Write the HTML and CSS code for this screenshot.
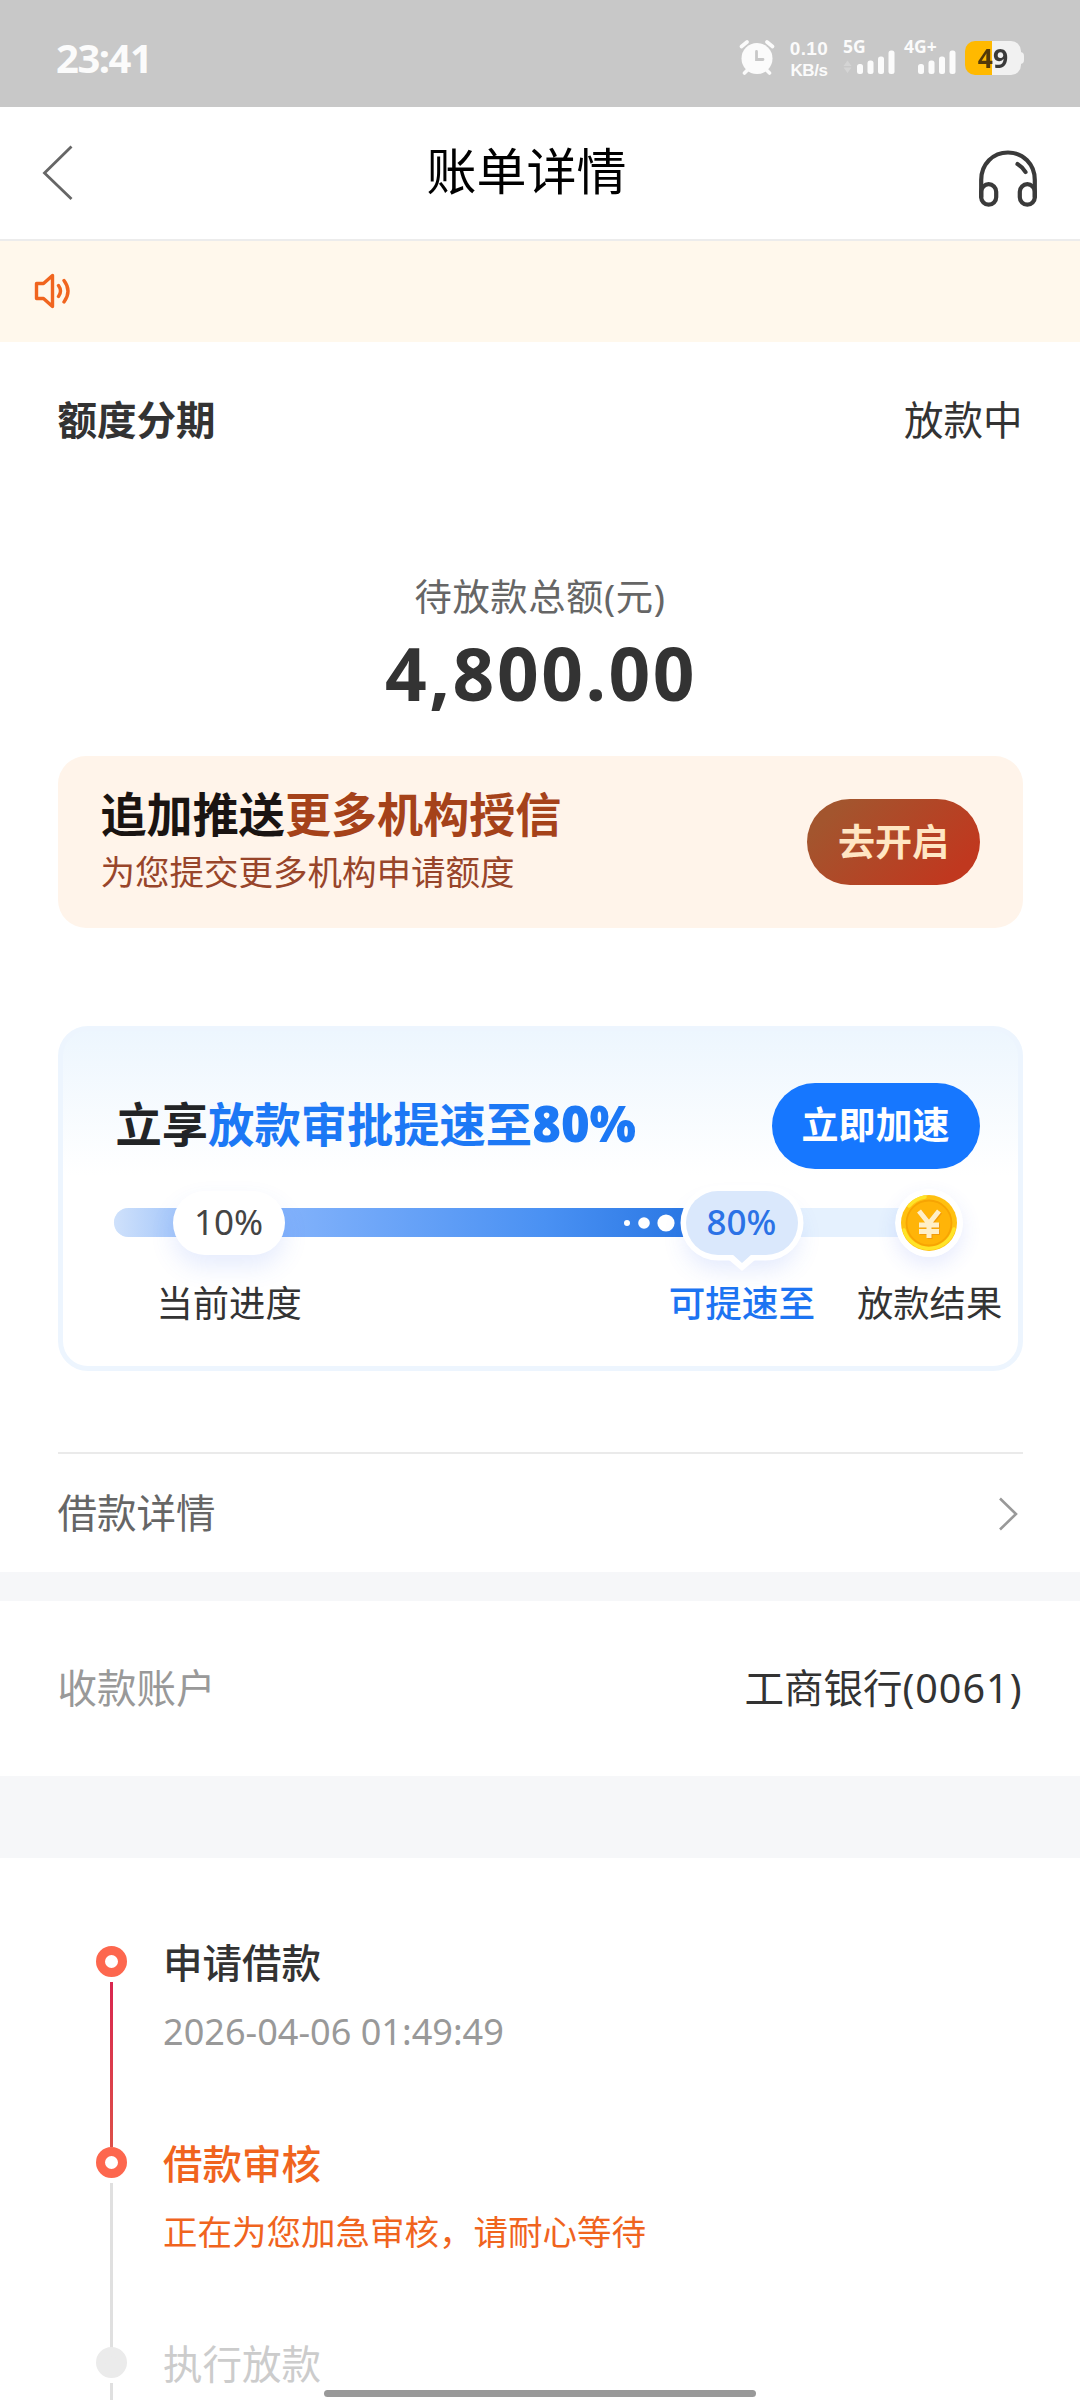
FILE: index.html
```html
<!DOCTYPE html>
<html lang="zh-CN">
<head>
<meta charset="utf-8">
<title>账单详情</title>
<link rel="stylesheet" href="styles.css">
</head>
<body>
<div class="status-bar">
  <span class="clock">23:41</span>
  <div class="status-icons">
    <svg class="alarm" width="36" height="36" viewBox="0 0 36 36" fill="none" stroke="#fbfbfb" stroke-linecap="round">
      <circle cx="18" cy="18.5" r="15.5" fill="#fbfbfb" stroke="none"/>
      <path d="M2.500 6.500L8 2M33.500 6.500L28 2" stroke-width="3.600"/>
      <path d="M5.500 33L9 29.500M30.500 33L27 29.500" stroke-width="3.600"/>
      <path d="M17.500 11.500V19.500H24" stroke="#c8c8c8" stroke-width="2.800"/>
    </svg>
    <div class="net-speed"><span>0.10</span><span>KB/s</span></div>
    <svg class="signal" width="54" height="36" viewBox="0 0 54 36" fill="#fbfbfb">
      <path d="M4.500 20.500l4 5.500h-8zM4.500 33l4-5.500h-8z" fill="#d4d4d4"/>
      <rect x="14" y="24" width="6" height="10" rx="2.500"/>
      <rect x="24.500" y="20.500" width="6" height="13.500" rx="2.500"/>
      <rect x="35" y="16.500" width="6" height="17.500" rx="2.500"/>
      <rect x="45.500" y="10.500" width="6" height="23.500" rx="2.500"/>
      <text x="0" y="13">5G</text>
    </svg>
    <svg class="signal" width="54" height="36" viewBox="0 0 54 36" fill="#fbfbfb">
      <rect x="14" y="24" width="6" height="10" rx="2.500"/>
      <rect x="24.500" y="20.500" width="6" height="13.500" rx="2.500"/>
      <rect x="35" y="16.500" width="6" height="17.500" rx="2.500"/>
      <rect x="45.500" y="10.500" width="6" height="23.500" rx="2.500"/>
      <text x="0" y="13">4G+</text>
    </svg>
    <div class="battery"><span class="battery-level">49</span></div>
  </div>
</div>

<header class="nav">
  <svg class="back" width="32" height="56" viewBox="0 0 32 56" fill="none" stroke="#666" stroke-width="2.800"><path d="M29.500 1.500L2.500 28L29.500 54"/></svg>
  <h1>账单详情</h1>
  <svg class="service" width="58" height="58" viewBox="0 0 58 58" fill="none" stroke="#3a3a3a" stroke-width="4.200" stroke-linecap="round">
    <path d="M2.200 47V30C2.200 14 14 2.500 29 2.500S55.800 14 55.800 30V47"/>
    <rect x="2.200" y="34.200" width="15" height="20.500" rx="7.500"/>
    <rect x="40.800" y="34.200" width="15" height="20.500" rx="7.500"/>
    <path d="M38.500 14Q43.500 17 46.500 22"/>
  </svg>
</header>

<div class="notice">
  <svg width="37" height="36" viewBox="0 0 37 36" fill="none" stroke="#f0651f" stroke-width="3.400" stroke-linejoin="round" stroke-linecap="round">
    <path d="M2.500 10.500H9.500L18.500 2.500V33.500L9.500 25.500H2.500Z"/>
    <path d="M24.500 12.500Q28.500 18 24.500 23.500M30 7.500Q38 18 30 29"/>
  </svg>
</div>

<main>
  <section class="bill">
    <div class="row bill-head"><strong>额度分期</strong><span>放款中</span></div>
    <p class="amount-label">待放款总额(元)</p>
    <p class="amount">4,800.00</p>

    <div class="promo">
      <div class="promo-text">
        <h2>追加推送<em>更多机构授信</em></h2>
        <p>为您提交更多机构申请额度</p>
      </div>
      <button class="pill promo-btn">去开启</button>
    </div>

    <div class="speed-card">
      <div class="speed-head">
        <h2>立享<em>放款审批提速至<b>80%</b></em></h2>
        <button class="pill speed-btn">立即加速</button>
      </div>
      <div class="track">
        <div class="track-fill"></div>
        <span class="mark now">10%</span>
        <svg class="dots" width="52" height="20" viewBox="0 0 52 20" fill="#fff">
          <circle cx="4" cy="10" r="3"/><circle cx="21" cy="10" r="5.800"/><circle cx="43" cy="10" r="8.600"/>
        </svg>
        <span class="mark target">80%</span>
        <svg class="coin" width="68" height="68" viewBox="0 0 68 68">
          <circle cx="34" cy="34" r="34" fill="#fff"/>
          <circle cx="34" cy="34" r="28" fill="#ffc010"/>
          <path d="M9 41A26 26 0 0 0 59 40M14 17A26 26 0 0 1 30 8" fill="none" stroke="#ffe428" stroke-width="3.500" stroke-linecap="round"/>
          <circle cx="34" cy="34" r="22.500" fill="#ffb408" stroke="#f7a403" stroke-width="1.800"/>
          <path d="M24 22L34 34.500L44 22M34 34.500V49M24 36H44M24 42.500H44" fill="none" stroke="#f39a0a" stroke-width="5" transform="translate(1 1)"/>
          <path d="M24 22L34 34.500L44 22M34 34.500V49M24 36H44M24 42.500H44" fill="none" stroke="#ffefc8" stroke-width="5"/>
        </svg>
      </div>
      <div class="track-labels"><span>当前进度</span><span class="active">可提速至</span><span>放款结果</span></div>
    </div>

    <div class="row detail">
      <span>借款详情</span>
      <svg width="22" height="36" viewBox="0 0 22 36" fill="none" stroke="#999" stroke-width="2.600"><path d="M2 2.500L18 18L2 33.500"/></svg>
    </div>
  </section>

  <section class="row account"><span>收款账户</span><span class="bank">工商银行<span class="tail">(0061)</span></span></section>

  <section class="timeline">
    <div class="step done">
      <div class="rail"><i class="dot"></i><i class="line"></i></div>
      <div class="step-body"><h3>申请借款</h3><p>2026-04-06 01:49:49</p></div>
    </div>
    <div class="step current">
      <div class="rail"><i class="dot"></i><i class="line"></i></div>
      <div class="step-body"><h3>借款审核</h3><p>正在为您加急审核，请耐心等待</p></div>
    </div>
    <div class="step pending">
      <div class="rail"><i class="dot"></i><i class="line"></i></div>
      <div class="step-body"><h3>执行放款</h3></div>
    </div>
  </section>
</main>
<div class="home-indicator"></div>
</body>
</html>
```
FILE: styles.css
```css
* { box-sizing: border-box; margin: 0; padding: 0; }

body {
  position: relative;
  width: 1080px;
  height: 2400px;
  overflow: hidden;
  background: #fff;
  color: #333;
  font-family: "Noto Sans", "Noto Sans CJK SC", sans-serif;
  font-size: 39.500px;
}

h1, h2, h3 { font-weight: 400; }
em, i { font-style: normal; }
svg { display: block; flex: none; }
button { border: 0; font: inherit; }

/* Status bar */
.status-bar {
  display: flex;
  justify-content: space-between;
  height: 107px;
  padding: 40px 55px 0 56px;
  background: #c8c8c8;
  color: #fbfbfb;
}
.clock { font-size: 40px; font-weight: 700; line-height: 36px; letter-spacing: -1.500px; }
.status-icons { display: flex; align-items: flex-start; }
.net-speed {
  display: flex;
  flex-direction: column;
  align-items: center;
  width: 42px;
  margin: -2px 13px 0 13px;
  font-family: "Liberation Sans", Arial, sans-serif;
  font-size: 19px;
  font-weight: 700;
  line-height: 22px;
  letter-spacing: .4px;
}
.net-speed span + span { font-size: 17px; letter-spacing: -0.400px; }
.signal { margin-right: 7px; overflow: visible; }
.signal text { font-size: 17.500px; font-weight: 700; }
.battery {
  position: relative;
  width: 56px;
  height: 34px;
  margin: 1px 4px 0 0;
  border-radius: 10px;
  background: linear-gradient(90deg, #ffb900 27px, #f1f1f1 27px);
}
.battery::after {
  content: "";
  position: absolute;
  right: -3px;
  top: 11px;
  width: 4px;
  height: 12px;
  border-radius: 0 4px 4px 0;
  background: #f1f1f1;
}
.battery-level {
  display: block;
  text-align: center;
  line-height: 35px;
  font-size: 26.500px;
  font-weight: 700;
  color: transparent;
  background: linear-gradient(90deg, #533909 27px, #3a3a3a 27px);
  background-clip: text;
  -webkit-background-clip: text;
}

/* Title bar */
.nav {
  display: flex;
  justify-content: space-between;
  height: 134px;
  padding: 0 43px 0 42px;
  border-bottom: 2px solid #ececec;
  color: #000;
}
.back { margin-top: 38px; }
.nav h1 { font-size: 50px; line-height: 128px; }
.service { margin-top: 43px; }

.notice { height: 101px; padding: 32px 0 0 34px; background: #fff8ec; }

/* Bill summary */
.row { display: flex; align-items: center; justify-content: space-between; }
.bill { padding: 0 57.500px; }
.bill-head { height: 156px; padding-bottom: 4px; }
.bill-head strong { font-weight: 700; }
.amount-label {
  margin-top: 70px;
  text-align: center;
  font-size: 37.300px;
  line-height: 58px;
  letter-spacing: .6px;
  color: #666;
}
.amount {
  margin-top: -1px;
  padding-left: 2px;
  text-align: center;
  font-size: 73px;
  line-height: 96px;
  font-weight: 700;
  letter-spacing: 2.500px;
}

.promo {
  display: flex;
  align-items: center;
  justify-content: space-between;
  height: 172px;
  margin-top: 35px;
  padding: 0 42.500px 0 43px;
  border-radius: 28px;
  background: #fff4ea;
}
.promo h2 { font-size: 46.100px; line-height: 60px; font-weight: 700; color: #1a1412; }
.promo em { color: #a5421a; }
.promo p { font-size: 34.500px; line-height: 54px; color: #98452a; }
.pill { height: 86px; padding-bottom: 5px; border-radius: 43px; font-size: 37px; font-weight: 700; text-align: center; }
.promo-btn { width: 173px; background: linear-gradient(135deg, #a3552e 15%, #c0381f 85%); color: #ffe6c3; }

/* Speed-up card */
.speed-card {
  height: 345px;
  margin-top: 98px;
  padding: 51.500px 0 0 53px;
  border: 5.500px solid #edf5fe;
  border-radius: 30px;
  background: linear-gradient(#edf6fe, #fff 145px);
}
.speed-head { display: flex; justify-content: space-between; height: 86px; padding-right: 38px; }
.speed-head h2 { line-height: 81px; font-size: 46.300px; font-weight: 700; color: #222426; white-space: nowrap; }
.speed-head em { color: #1c78f5; }
.speed-head b { font-size: 49px; }
.speed-btn { width: 208px; background: #1677ff; color: #fff; }

.track {
  position: relative;
  width: 816px;
  height: 29px;
  margin: 39px 0 0 -2px;
  border-radius: 15px;
  background: #e5f1fe;
}
.track-fill {
  width: 600px;
  height: 29px;
  border-radius: 15px 0 0 15px;
  background: linear-gradient(90deg, #cfe1fb 0, #a8c9fa 60px, #82b2fb 170px, #4a91f3 430px, #2b78e4 570px);
}
.mark {
  position: absolute;
  top: -17px;
  width: 112px;
  height: 64px;
  border-radius: 32px;
  background: #fff;
  box-shadow: 0 12px 24px rgba(60, 110, 240, .13);
  font-size: 35px;
  line-height: 62px;
  text-align: center;
  color: #444;
}
.mark.now { left: 59px; }
.mark.target {
  left: 572px;
  background: #dae8fc;
  color: #2b72e6;
  font-weight: 500;
  box-shadow: 0 0 0 5.500px #fff, 0 14px 24px rgba(60, 110, 240, .15);
}
.mark.target::before,
.mark.target::after {
  content: "";
  position: absolute;
  left: 50%;
  border-style: solid;
  border-color: transparent;
  transform: translateX(-50%);
}
.mark.target::before { top: 69px; border-width: 11px 13px 0; border-top-color: #fff; }
.mark.target::after { top: 63px; border-width: 9px 10px 0; border-top-color: #dae8fc; }
.dots { position: absolute; left: 509px; top: 5px; }
.coin {
  position: absolute;
  left: 781px;
  top: -19px;
  border-radius: 50%;
  box-shadow: 0 8px 20px rgba(60, 90, 240, .12);
}
.track-labels {
  display: flex;
  margin-top: 38px;
  padding-left: 41px;
  font-size: 36.300px;
  line-height: 56px;
  white-space: nowrap;
}
.track-labels .active { margin: 0 42px 0 367px; color: #1c74f2; font-weight: 500; font-size: 36.600px; }

.detail {
  height: 120px;
  margin-top: 81px;
  padding-right: 3px;
  border-top: 2px solid #eaeaea;
  color: #666;
}
.detail span { padding-bottom: 5px; }
.detail svg { margin-top: 2px; }

.account {
  height: 204px;
  padding: 0 57.500px 5px;
  border-top: 29px solid #f6f7f9;
  color: #999;
}
.account .bank { color: #333; }
.account .tail { letter-spacing: 1px; }

/* Progress timeline */
.timeline { height: 624px; padding: 83px 0 0 95px; border-top: 82px solid #f6f7f9; overflow: hidden; }
.step { display: flex; height: 200.700px; }
.rail { display: flex; flex-direction: column; align-items: center; width: 32px; margin-top: 5px; }
.dot {
  flex: none;
  width: 31px;
  height: 31px;
  border: 9px solid #fd674e;
  border-radius: 50%;
}
.line { flex: none; width: 3px; height: 165px; margin-top: 5px; background: #e0e0e0; }
.done .line { background: linear-gradient(#d9264f, #dd5049); }
.pending .dot { border-color: #ebebeb; background: #ebebeb; }
.step-body { margin: -1px 0 0 36px; }
.step h3 { font-size: 39.500px; line-height: 46px; font-weight: 500; }
.step p { margin-top: 22px; font-size: 36.100px; line-height: 46px; color: #999; }
.step.current h3, .step.current p { color: #f0641e; }
.step.current p { font-size: 34.500px; }
.step.pending h3 { color: #ccc; font-weight: 400; }

.home-indicator {
  position: absolute;
  left: 324px;
  bottom: 3px;
  width: 432px;
  height: 7px;
  border-radius: 4px;
  background: #999;
}
```
